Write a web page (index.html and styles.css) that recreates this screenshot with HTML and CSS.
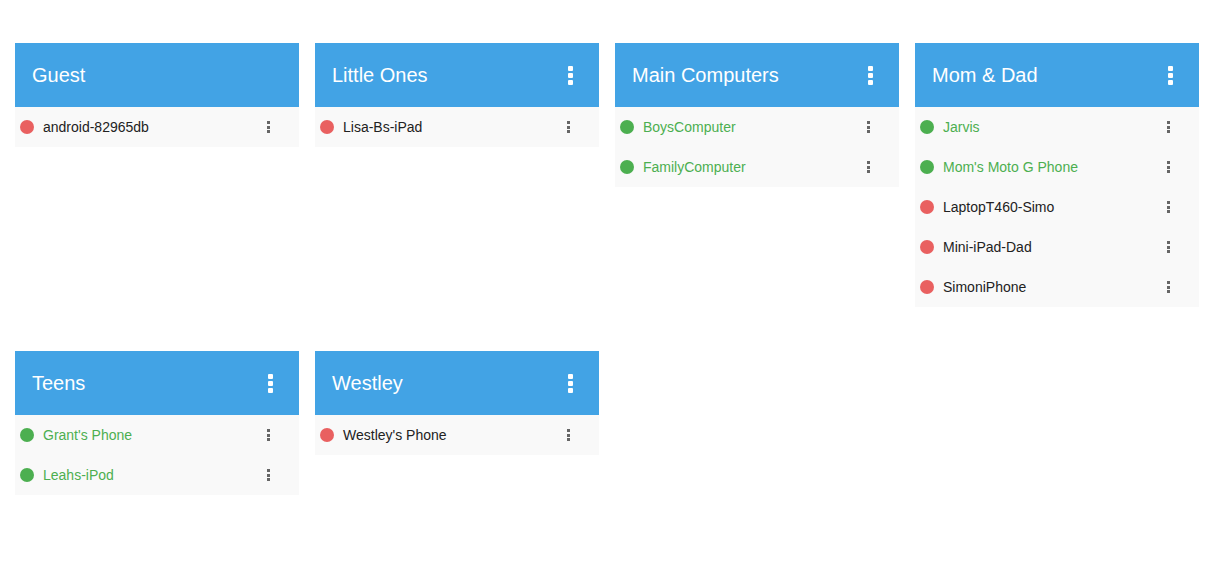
FILE: index.html
```html
<!DOCTYPE html>
<html>
<head>
  <meta charset="utf-8">
  <title>Device Groups</title>
  <link rel="stylesheet" href="styles.css">
</head>
<body>
  <section class="groups">

    <div class="group">
      <div class="group-head">
        <h2>Guest</h2>
      </div>
      <ul class="devices">
        <li class="offline"><span class="dot"></span><span class="name">android-82965db</span><span class="more"><i></i><i></i><i></i></span></li>
      </ul>
    </div>

    <div class="group">
      <div class="group-head">
        <h2>Little Ones</h2>
        <span class="more big"><i></i><i></i><i></i></span>
      </div>
      <ul class="devices">
        <li class="offline"><span class="dot"></span><span class="name">Lisa-Bs-iPad</span><span class="more"><i></i><i></i><i></i></span></li>
      </ul>
    </div>

    <div class="group">
      <div class="group-head">
        <h2>Main Computers</h2>
        <span class="more big"><i></i><i></i><i></i></span>
      </div>
      <ul class="devices">
        <li class="online"><span class="dot"></span><span class="name">BoysComputer</span><span class="more"><i></i><i></i><i></i></span></li>
        <li class="online"><span class="dot"></span><span class="name">FamilyComputer</span><span class="more"><i></i><i></i><i></i></span></li>
      </ul>
    </div>

    <div class="group">
      <div class="group-head">
        <h2>Mom &amp; Dad</h2>
        <span class="more big"><i></i><i></i><i></i></span>
      </div>
      <ul class="devices">
        <li class="online"><span class="dot"></span><span class="name">Jarvis</span><span class="more"><i></i><i></i><i></i></span></li>
        <li class="online"><span class="dot"></span><span class="name">Mom's Moto G Phone</span><span class="more"><i></i><i></i><i></i></span></li>
        <li class="offline"><span class="dot"></span><span class="name">LaptopT460-Simo</span><span class="more"><i></i><i></i><i></i></span></li>
        <li class="offline"><span class="dot"></span><span class="name">Mini-iPad-Dad</span><span class="more"><i></i><i></i><i></i></span></li>
        <li class="offline"><span class="dot"></span><span class="name">SimoniPhone</span><span class="more"><i></i><i></i><i></i></span></li>
      </ul>
    </div>

    <div class="group">
      <div class="group-head">
        <h2>Teens</h2>
        <span class="more big"><i></i><i></i><i></i></span>
      </div>
      <ul class="devices">
        <li class="online"><span class="dot"></span><span class="name">Grant's Phone</span><span class="more"><i></i><i></i><i></i></span></li>
        <li class="online"><span class="dot"></span><span class="name">Leahs-iPod</span><span class="more"><i></i><i></i><i></i></span></li>
      </ul>
    </div>

    <div class="group">
      <div class="group-head">
        <h2>Westley</h2>
        <span class="more big"><i></i><i></i><i></i></span>
      </div>
      <ul class="devices">
        <li class="offline"><span class="dot"></span><span class="name">Westley's Phone</span><span class="more"><i></i><i></i><i></i></span></li>
      </ul>
    </div>

  </section>
</body>
</html>
```

FILE: styles.css
```css
body {
  margin: 0;
  background-color: #fff;
  font-family: "Liberation Sans", Arial, sans-serif;
}
.groups {
  display: grid;
  grid-template-columns: repeat(4, 284px);
  column-gap: 16px;
  row-gap: 44px;
  align-items: start;
  padding: 43px 15px;
}
.group-head {
  display: flex;
  align-items: center;
  height: 64px;
  padding: 0 26px 0 17px;
  background-color: #42a3e5;
  color: #fff;
}
.group-head h2 {
  flex: 1;
  margin: 0;
  font-size: 20px;
  font-weight: normal;
}
.devices {
  list-style: none;
  margin: 0;
  padding: 0;
  background-color: #f9f9f9;
}
.devices li {
  display: flex;
  align-items: center;
  height: 40px;
  padding: 0 29px 0 5px;
  font-size: 14px;
  color: #222;
}
.devices li.online {
  color: #4caf50;
}
.dot {
  width: 14px;
  height: 14px;
  border-radius: 50%;
  margin-right: 9px;
}
.online .dot {
  background-color: #4caf50;
}
.offline .dot {
  background-color: #e96060;
}
.name {
  flex: 1;
}
.more {
  display: flex;
  flex-direction: column;
  gap: 1.5px;
}
.more i {
  display: block;
  width: 3px;
  height: 3px;
  background-color: #666;
}
.more.big {
  gap: 2px;
}
.more.big i {
  width: 5px;
  height: 5px;
  border-radius: 1px;
  background-color: #fff;
}
```
